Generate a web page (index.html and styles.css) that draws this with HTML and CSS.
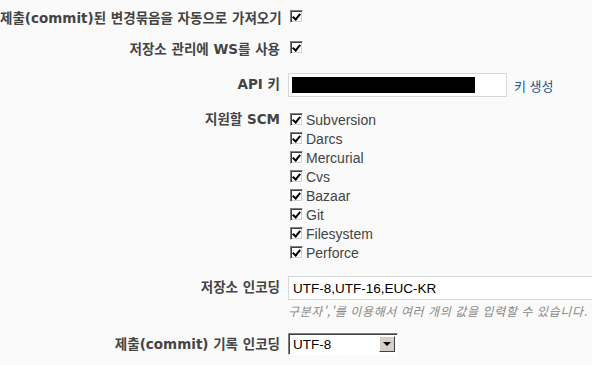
FILE: index.html
```html
<!DOCTYPE html>
<html lang="ko">
  <head>
    <meta charset="UTF-8" />
    <title>저장소 설정</title>
    <link rel="stylesheet" href="styles.css">
  </head>
  <body>
    <div class="settings">
      <div class="row row-first">
        <label class="label">제출(commit)된 변경묶음을 자동으로 가져오기</label>
        <div class="field"><input type="checkbox" class="check" checked /></div>
      </div>

      <div class="row row-ws">
        <label class="label">저장소 관리에 WS를 사용</label>
        <div class="field"><input type="checkbox" class="check" checked /></div>
      </div>

      <div class="row row-api">
        <label class="label">API 키</label>
        <div class="field">
          <div class="api-input"><span class="api-mask"></span></div>
          <a href="#" class="gen-link">키 생성</a>
        </div>
      </div>

      <div class="row row-scm">
        <label class="label">지원할 SCM</label>
        <div class="field scm-list">
          <label class="scm"><input type="checkbox" class="check" checked />Subversion</label>
          <label class="scm"><input type="checkbox" class="check" checked />Darcs</label>
          <label class="scm"><input type="checkbox" class="check" checked />Mercurial</label>
          <label class="scm"><input type="checkbox" class="check" checked />Cvs</label>
          <label class="scm"><input type="checkbox" class="check" checked />Bazaar</label>
          <label class="scm"><input type="checkbox" class="check" checked />Git</label>
          <label class="scm"><input type="checkbox" class="check" checked />Filesystem</label>
          <label class="scm"><input type="checkbox" class="check" checked />Perforce</label>
        </div>
      </div>

      <div class="row row-enc">
        <label class="label">저장소 인코딩</label>
        <div class="field enc-field">
          <input type="text" class="enc-input" value="UTF-8,UTF-16,EUC-KR" />
          <em class="hint">구분자','를 이용해서 여러 개의 값을 입력할 수 있습니다.</em>
        </div>
      </div>

      <div class="row row-log">
        <label class="label">제출(commit) 기록 인코딩</label>
        <div class="field">
          <div class="select">
            <span class="select-value">UTF-8</span>
            <span class="select-btn"><span class="arrow"></span></span>
          </div>
        </div>
      </div>
    </div>
  </body>
</html>
```

FILE: styles.css
```css
* {
  margin: 0;
  padding: 0;
  box-sizing: border-box;
}
body {
  background: #fafafa;
  color: #444;
  font-family: "DejaVu Sans", "Noto Sans CJK KR", sans-serif;
  font-size: 12px;
  overflow: hidden;
}
.settings {
  padding-top: 8px;
}
.row {
  display: grid;
  grid-template-columns: 280px 1fr;
  column-gap: 8px;
  align-items: start;
}
.label {
  text-align: right;
  font-weight: bold;
  font-size: 13.5px;
  color: #444;
  white-space: nowrap;
  line-height: 16px;
}
.field {
  display: flex;
  align-items: center;
}

/* classic sunken checkbox */
.check {
  appearance: none;
  -webkit-appearance: none;
  width: 13px;
  height: 13px;
  margin: 0 3px 0 2px;
  background: #fff;
  border: 1px solid;
  border-color: #808080 #fff #fff #808080;
  box-shadow: inset 1px 1px 0 #404040, inset -1px -1px 0 #d4d0c8;
  position: relative;
  flex: none;
}
.check:checked::after {
  content: "";
  position: absolute;
  left: 3px;
  top: 1px;
  width: 3px;
  height: 6px;
  border: solid #000;
  border-width: 0 2px 2px 0;
  transform: rotate(40deg);
}

.row-first {
  margin-top: 2px;
}
.row-ws {
  margin-top: 15px;
}
.row-api {
  margin-top: 16px;
}
.row-api .label {
  padding-top: 3px;
}
.api-input {
  width: 219px;
  height: 24px;
  background: #fff;
  border: 1px solid #d7d7d7;
  padding: 3px;
}
.api-mask {
  display: block;
  width: 183px;
  height: 16px;
  background: #000;
}
.gen-link {
  margin-left: 7px;
  color: #2a5685;
  text-decoration: none;
  font-family: "Noto Sans CJK KR", sans-serif;
  font-size: 13px;
}

.row-scm {
  margin-top: 14px;
}
.scm-list {
  flex-direction: column;
  align-items: flex-start;
  gap: 2px;
}
.scm {
  display: flex;
  align-items: center;
  height: 17px;
  font-family: "Liberation Sans", "Noto Sans CJK KR", sans-serif;
  font-size: 14px;
  color: #444;
}

.row-enc {
  margin-top: 15px;
}
.row-enc .label {
  padding-top: 3px;
}
.enc-field {
  flex-direction: column;
  align-items: flex-start;
}
.enc-input {
  width: 320px;
  height: 24px;
  border: 1px solid #d7d7d7;
  background: #fff;
  padding: 0 4px;
  font-family: "Liberation Sans", sans-serif;
  font-size: 13.5px;
  color: #000;
  outline: none;
}
.hint {
  margin-top: 2px;
  font-size: 12px;
  letter-spacing: 0.6px;
  color: #888;
  white-space: nowrap;
  font-family: "Noto Sans CJK KR", sans-serif;
}

.row-log {
  margin-top: 14px;
}
.row-log .label {
  padding-top: 3px;
}
.select {
  display: flex;
  align-items: center;
  justify-content: space-between;
  width: 110px;
  height: 22px;
  background: #fff;
  border: 1px solid;
  border-color: #808080 #fff #fff #808080;
  box-shadow: inset 1px 1px 0 #404040;
  padding: 0 2px 0 4px;
}
.select-value {
  font-family: "Liberation Sans", sans-serif;
  font-size: 13.5px;
  color: #000;
}
.select-btn {
  width: 16px;
  height: 16px;
  background: #d4d0c8;
  border: 1px solid;
  border-color: #fff #404040 #404040 #fff;
  display: flex;
  align-items: center;
  justify-content: center;
}
.arrow {
  width: 0;
  height: 0;
  border-left: 4px solid transparent;
  border-right: 4px solid transparent;
  border-top: 4px solid #000;
}
```
